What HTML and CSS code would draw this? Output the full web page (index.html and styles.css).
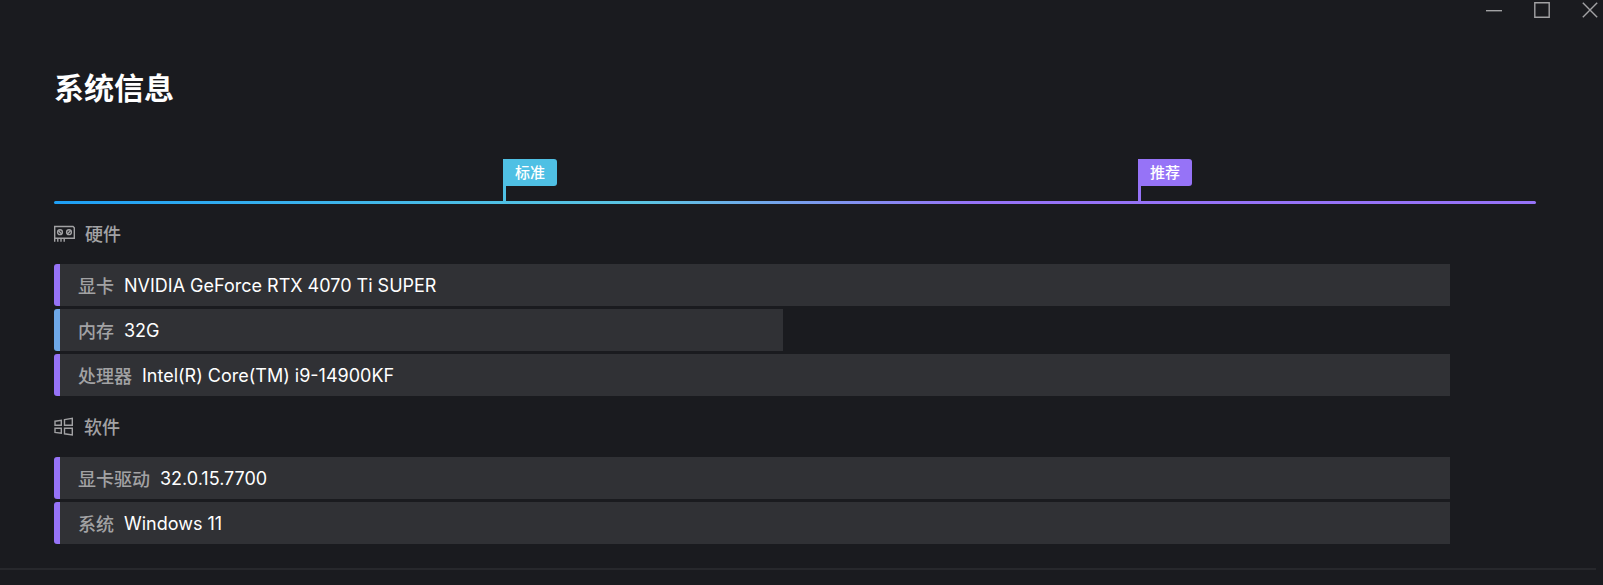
FILE: index.html
```html
<!DOCTYPE html>
<html lang="zh-CN">
<head>
    <meta charset="UTF-8">
    <meta name="viewport" content="width=device-width, initial-scale=1.0">
    <title>系统信息</title>
    <link rel="stylesheet" href="styles.css">
</head>
<body>
    <header class="titlebar">
        <button class="win-btn" type="button" aria-label="最小化">
            <svg width="16" height="16" viewBox="0 0 16 16"><path d="M0 8.7H16"/></svg>
        </button>
        <button class="win-btn" type="button" aria-label="最大化">
            <svg width="16" height="16" viewBox="0 0 16 16"><path d="M.8 .8H15.2V15.2H.8Z"/></svg>
        </button>
        <button class="win-btn" type="button" aria-label="关闭">
            <svg width="16" height="16" viewBox="0 0 16 16"><path d="M.8 .8 15.2 15.2M15.2 .8 .8 15.2"/></svg>
        </button>
    </header>

    <main class="content">
        <h1>系统信息</h1>

        <!-- Requirement scale -->
        <div class="scale">
            <div class="marker marker-standard"><span class="flag">标准</span></div>
            <div class="marker marker-recommended"><span class="flag">推荐</span></div>
        </div>

        <section>
            <h2 class="group-title">
                <svg width="21" height="18" viewBox="0 0 21 18">
                    <path d="M.7 17.8V2.5H19L20.3 3.8V14.2H.7M3.8 14.2V17.8M7 14.2V17.8M10.2 14.2V17.8"/>
                    <circle cx="6" cy="8.2" r="2.4"/>
                    <circle cx="15" cy="8.2" r="2.4"/>
                    <path d="M4.3 6.5 7.7 9.9M13.3 9.9 16.7 6.5"/>
                </svg>
                硬件
            </h2>
            <ul class="specs">
                <li class="spec"><span class="label">显卡</span><span class="value">NVIDIA GeForce RTX 4070 Ti SUPER</span></li>
                <li class="spec spec-mid"><span class="label">内存</span><span class="value">32G</span></li>
                <li class="spec"><span class="label">处理器</span><span class="value">Intel(R) Core(TM) i9-14900KF</span></li>
            </ul>
        </section>

        <section>
            <h2 class="group-title">
                <svg width="20" height="20" viewBox="0 0 20 20">
                    <path d="M1 5.2 7.3 4.2V9.2H1ZM10.5 3.6 18.3 2.4V9.2H10.5ZM1 12.3H7.3V17.3L1 16.4ZM10.5 12.3H18.3V19L10.5 17.8Z"/>
                </svg>
                软件
            </h2>
            <ul class="specs">
                <li class="spec"><span class="label">显卡驱动</span><span class="value">32.0.15.7700</span></li>
                <li class="spec"><span class="label">系统</span><span class="value">Windows 11</span></li>
            </ul>
        </section>
    </main>

    <hr class="divider">
</body>
</html>
```
FILE: styles.css
```css
* {
    box-sizing: border-box;
}
body {
    margin: 0;
    min-height: 100vh;
    background: #1a1b1f;
    color: #fff;
    font-family: Inter, "Noto Sans CJK SC", sans-serif;
    font-size: 18px;
}
svg {
    display: block;
    fill: none;
    stroke: #a2a2a4;
    stroke-width: 1.4;
}

/* Window controls */
.titlebar {
    display: flex;
    justify-content: flex-end;
    gap: 32px;
    padding: 2px 5px;
}
.win-btn {
    padding: 0;
    border: 0;
    background: none;
    cursor: pointer;
}

.content {
    padding: 44px 67px 0 54px;
}
h1 {
    margin: 0;
    font-size: 30px;
    line-height: 48px;
    font-weight: 700;
}

/* Scale line with the two flags standing on it */
.scale {
    display: grid;
    grid-template-columns: 30.3% 42.85% 1fr;
    margin-top: 47px;
}
.scale::after {
    content: "";
    grid-column: 1 / -1;
    height: 3px;
    border-radius: 2px;
    background: linear-gradient(90deg, #1e9ff5 0%, #4fc0e4 30%, #5cc4e2 40%, #9673f7 62%);
}
.marker {
    height: 42px;
    border-left: 3px solid;
}
.marker-standard {
    grid-column: 2;
    border-color: #4fc0e4;
}
.marker-recommended {
    grid-column: 3;
    border-color: #9673f7;
}
.flag {
    display: inline-block;
    padding: 0 12px 0 9px;
    border-radius: 0 3px 3px 0;
    font-size: 15px;
    line-height: 27px;
    font-weight: 500;
    vertical-align: top;
}
.marker-standard .flag {
    background: #4fc0e4;
}
.marker-recommended .flag {
    background: #9673f7;
}

.group-title {
    display: flex;
    align-items: center;
    gap: 10px;
    height: 60px;
    margin: 0;
    padding-bottom: 2px;
    color: #a2a2a4;
    font-size: 18px;
    font-weight: 500;
}
section + section {
    margin-top: 1px;
}
.specs {
    display: grid;
    gap: 3px;
    margin: 0;
    padding: 0;
    list-style: none;
}
.spec {
    display: flex;
    align-items: center;
    gap: 10px;
    width: 94.2%;
    height: 42px;
    padding-left: 18px;
    border-left: 6px solid #9673f7;
    border-radius: 3px 0 0 3px;
    background: #303135;
}
.spec-mid {
    width: 49.2%;
    border-color: #6ea8e8;
}
.label {
    color: #a2a2a4;
    font-weight: 500;
}

.divider {
    height: 2px;
    margin: 24px 7px 0 0;
    border: 0;
    background: #27282c;
}
```
